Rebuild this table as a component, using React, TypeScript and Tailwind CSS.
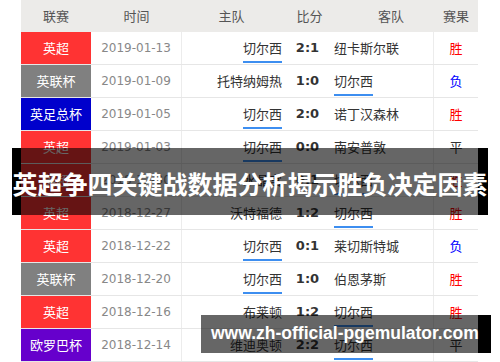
import React from "react";

type Row = {
  league: string;
  color: string;
  date: string;
  home: string;
  score: string;
  away: string;
  result: string;
};

const rows: Row[] = [
  { league: "英超", color: "bg-[#ff3333]", date: "2019-01-13", home: "切尔西", score: "2:1", away: "纽卡斯尔联", result: "胜" },
  { league: "英联杯", color: "bg-[#808080]", date: "2019-01-09", home: "托特纳姆热", score: "1:0", away: "切尔西", result: "负" },
  { league: "英足总杯", color: "bg-[#0000cc]", date: "2019-01-05", home: "切尔西", score: "2:0", away: "诺丁汉森林", result: "胜" },
  { league: "英超", color: "bg-[#ff3333]", date: "2019-01-03", home: "切尔西", score: "0:0", away: "南安普敦", result: "平" },
  { league: "英超", color: "bg-[#ff3333]", date: "2018-12-30", home: "水晶宫", score: "0:1", away: "切尔西", result: "胜" },
  { league: "英超", color: "bg-[#ff3333]", date: "2018-12-27", home: "沃特福德", score: "1:2", away: "切尔西", result: "胜" },
  { league: "英超", color: "bg-[#ff3333]", date: "2018-12-22", home: "切尔西", score: "0:1", away: "莱切斯特城", result: "负" },
  { league: "英联杯", color: "bg-[#808080]", date: "2018-12-20", home: "切尔西", score: "1:0", away: "伯恩茅斯", result: "胜" },
  { league: "英超", color: "bg-[#ff3333]", date: "2018-12-16", home: "布莱顿", score: "1:2", away: "切尔西", result: "胜" },
  { league: "欧罗巴杯", color: "bg-[#6600cc]", date: "2018-12-14", home: "维迪奥顿", score: "2:2", away: "切尔西", result: "平" },
];

const cjk = { fontFamily: '"Noto Sans CJK SC", "Noto Sans", sans-serif' };

function Team({ name }: { name: string }) {
  const chelsea = name === "切尔西";
  return (
    <span className="relative leading-[16px]">
      {name}
      {chelsea && <span className="absolute left-0 right-0 -bottom-[7px] h-[2px] bg-[#3d8ef0]" />}
    </span>
  );
}

function resultColor(r: string) {
  if (r === "胜") return "text-[#ff0000]";
  if (r === "负") return "text-[#0000ff]";
  return "text-[#333333]";
}

export default function App() {
  return (
    <div className="relative w-[500px] h-[362px] bg-white overflow-hidden" style={cjk}>
      <div className="ml-[21px] w-[457px]">
        <div className="flex h-[32px] bg-[#ecebe9] text-[13px] text-[#555555] items-center">
          <div className="w-[70px] text-center">联赛</div>
          <div className="w-[91px] text-center">时间</div>
          <div className="w-[99px] text-center">主队</div>
          <div className="w-[57px] text-center">比分</div>
          <div className="w-[96px] pl-[10px] text-center">客队</div>
          <div className="flex-1 text-center">赛果</div>
        </div>
        {rows.map((r, i) => (
          <div key={i} className="flex h-[33px] border-b border-[#e6e6e6] text-[13px] text-[#333333]">
            <div className={`w-[70px] ${r.color} text-white flex items-center justify-center`}>{r.league}</div>
            <div
              className="w-[91px] border-r border-[#ececec] flex items-center justify-center text-[12px] text-[#888888]"
              style={{ fontFamily: '"DejaVu Sans", sans-serif' }}
            >
              {r.date}
            </div>
            <div className="w-[108px] flex items-center justify-end pr-[8px]">
              <Team name={r.home} />
            </div>
            <div
              className="w-[35px] flex items-center justify-center font-bold text-[13px] text-[#333333]"
              style={{ fontFamily: '"DejaVu Sans", sans-serif' }}
            >
              {r.score}
            </div>
            <div className="w-[109px] flex items-center pl-[9px] border-r border-[#ececec]">
              <Team name={r.away} />
            </div>
            <div className={`flex-1 flex items-center justify-center ${resultColor(r.result)}`}>{r.result}</div>
          </div>
        ))}
      </div>

      <div className="absolute top-[148px] left-[12px] w-[476px] h-[67px] flex">
        <div className="w-[9px] bg-black" />
        <div className="flex-1 bg-black/60" />
        <div className="w-[10px] bg-black" />
        <div className="absolute inset-0 flex items-center justify-center text-white font-bold text-[25px] leading-none whitespace-nowrap pt-[4px]">
          英超争四关键战数据分析揭示胜负决定因素
        </div>
      </div>

      <div className="absolute top-[315px] left-[201px] w-[290px] h-[38px] flex">
        <div className="flex-1 bg-black/60" />
        <div className="w-[13px] bg-black" />
        <div
          className="absolute inset-0 flex items-center pl-[10px] text-white font-bold text-[17.5px] leading-none whitespace-nowrap"
          style={{ fontFamily: '"Liberation Sans", Arial, sans-serif' }}
        >
          www.zh-official-pgemulator.com
        </div>
      </div>
    </div>
  );
}
